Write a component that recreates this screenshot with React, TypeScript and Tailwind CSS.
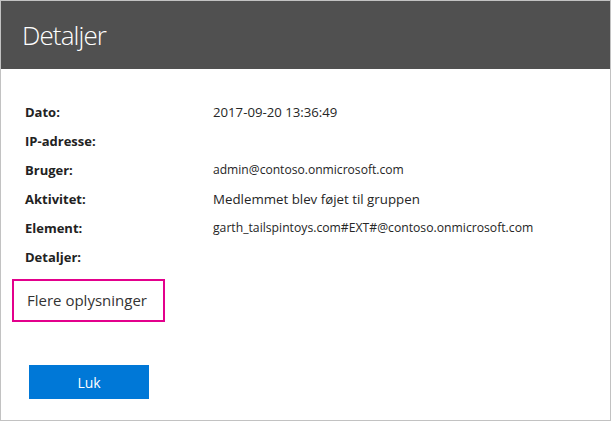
export default function App() {
  const rows: { label: string; value?: string; size: string }[] = [
    { label: "Dato:", value: "2017-09-20 13:36:49", size: "text-[13.2px]" },
    { label: "IP-adresse:", size: "text-[13px]" },
    { label: "Bruger:", value: "admin@contoso.onmicrosoft.com", size: "text-[12.1px]" },
    { label: "Aktivitet:", value: "Medlemmet blev føjet til gruppen", size: "text-[13.3px]" },
    { label: "Element:", value: "garth_tailspintoys.com#EXT#@contoso.onmicrosoft.com", size: "text-[12.2px]" },
    { label: "Detaljer:", size: "text-[13px]" },
  ];

  return (
    <div
      className="w-[611px] h-[421px] border border-[#c2c2c2] bg-white flex flex-col"
      style={{ fontFamily: "'Open Sans', 'Noto Sans', sans-serif" }}
    >
      {/* Header */}
      <div className="h-[68px] bg-[#505050] flex items-center pl-[21px] shrink-0">
        <h1 className="text-[26px] font-light text-white leading-none tracking-[-0.9px]">Detaljer</h1>
      </div>

      {/* Detail rows */}
      <div className="flex flex-col pt-[29px] px-[24px]">
        {rows.map((r) => (
          <div key={r.label} className="flex items-center h-[29px]">
            <div className="w-[188px] text-[13px] font-bold text-[#222]">{r.label}</div>
            <div className={`${r.size} text-[#262626]`}>{r.value}</div>
          </div>
        ))}
      </div>

      {/* More info */}
      <div className="pl-[11px] pt-[7px]">
        <div className="w-[153px] h-[43px] border-2 border-[#e3008c] flex items-center pl-[13px]">
          <span className="text-[15px] text-[#333]">Flere oplysninger</span>
        </div>
      </div>

      {/* Close button */}
      <div className="pl-[28px] pt-[43px]">
        <button className="w-[120px] h-[34px] bg-[#0078d7] text-white text-[14px]">Luk</button>
      </div>
    </div>
  );
}
